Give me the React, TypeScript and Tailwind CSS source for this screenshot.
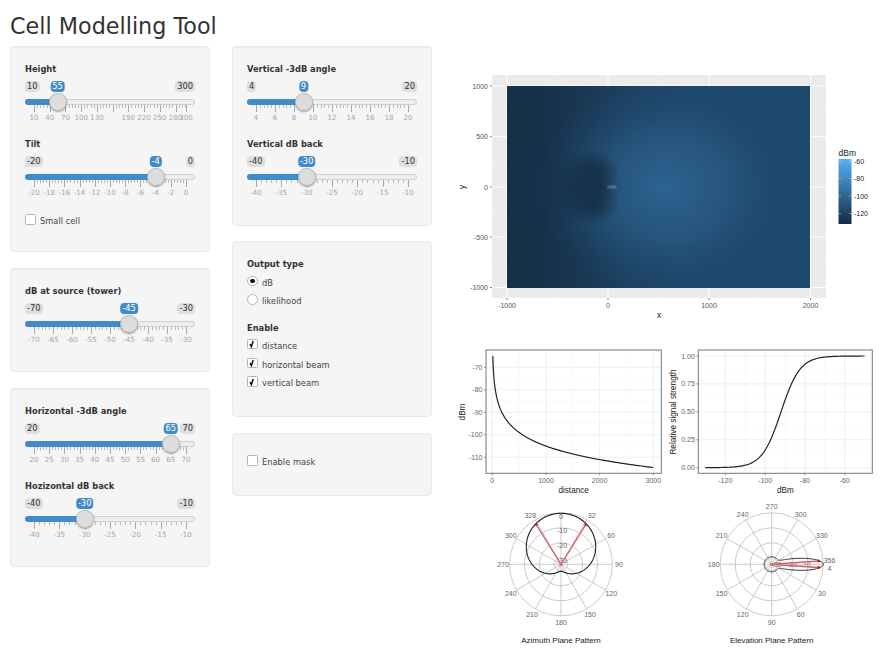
const arial = "font-['Liberation_Sans',sans-serif]"

type SliderProps = {
  label: string
  min: number
  max: number
  value: number
  step: number
  hide?: number[]
}

function Slider({ label, min, max, value, step, hide = [] }: SliderProps) {
  const pos = (v: number) => 9 + ((v - min) / (max - min)) * 152
  const majors: number[] = []
  for (let v = min; v < max; v += step) majors.push(v)
  majors.push(max)
  const minors: number[] = []
  for (let v = min; v < max - 0.001; v += step / 5) {
    if (!majors.some(m => Math.abs(m - v) < 0.001)) minors.push(v)
  }

  return (
    <div className="h-[75px]">
      <div className="h-[14px] text-[8.3px] leading-[14px] font-bold text-[#333]">{label}</div>
      <div className="relative h-[61px]">
        <div className="flex justify-between pt-[5px] text-[8.3px] leading-[11px] text-[#333]">
          <span className="rounded-sm bg-[#dedede] px-[2px]">{min}</span>
          <span className="rounded-sm bg-[#dedede] px-[2px]">{max}</span>
        </div>
        <span
          className="absolute top-[5px] -translate-x-1/2 rounded-sm bg-[#428bca] px-[2px] text-[8.3px] leading-[11px] text-white"
          style={{ left: pos(value) }}
        >
          {value}
        </span>
        <div className="relative mt-[7px] h-[6px] rounded-full border border-[#cfcfcf] bg-[#eeeeee]">
          <div
            className="absolute -top-px -bottom-px -left-px rounded-l-full bg-[#428bca]"
            style={{ width: pos(value) }}
          />
        </div>
        {minors.map(v => (
          <span key={v} className="absolute top-[29px] h-[3px] w-px bg-[#bbbbbb]" style={{ left: pos(v) }} />
        ))}
        {majors.map(v => (
          <span key={v} className="absolute top-[29px] h-[7px] w-px bg-[#a8a8a8]" style={{ left: pos(v) }} />
        ))}
        {majors
          .filter(v => !hide.includes(v))
          .map(v => (
            <span
              key={v}
              className="absolute top-[36px] -translate-x-1/2 text-[7.1px] leading-[12px] text-[#a6a6a6]"
              style={{ left: pos(v) }}
            >
              {v}
            </span>
          ))}
        <span
          className="absolute top-[16.5px] h-[18px] w-[18px] -translate-x-1/2 rounded-full border border-[#bdbdbd] bg-[#dddddd] shadow-[0_1px_2px_rgba(0,0,0,0.35)]"
          style={{ left: pos(value) }}
        />
      </div>
    </div>
  )
}

function Panel({ className, children }: { className: string; children: React.ReactNode }) {
  return (
    <div className={`w-[200px] rounded border border-[#e8e8e8] bg-[#f5f5f5] px-[14px] pt-[15px] shadow-[inset_0_1px_1px_rgba(0,0,0,0.03)] ${className}`}>
      {children}
    </div>
  )
}

function Check({ label, checked }: { label: string; checked?: boolean }) {
  return (
    <div className="flex h-[18.7px] items-center text-[8.3px] text-[#444]">
      <span className="mr-[4.5px] flex h-[10.5px] w-[10.5px] -translate-y-[1px] items-center justify-center rounded-[1.5px] border border-[#b5b5b5] bg-white">
        {checked && (
          <svg width="8" height="8" viewBox="0 0 8 8">
            <path d="M2 4.2 L3.4 6.6 L5.2 1" fill="none" stroke="#111" strokeWidth="1.5" />
          </svg>
        )}
      </span>
      <span className="translate-y-[1px]">{label}</span>
    </div>
  )
}

function Radio({ label, checked }: { label: string; checked?: boolean }) {
  return (
    <div className="flex h-[18.7px] items-center text-[8.3px] text-[#444]">
      <span className="mr-[4.5px] flex h-[10.5px] w-[10.5px] -translate-y-[1px] items-center justify-center rounded-full border border-[#b5b5b5] bg-white">
        {checked && <span className="h-[4.5px] w-[4.5px] rounded-full bg-[#111]" />}
      </span>
      <span className="translate-y-[1px]">{label}</span>
    </div>
  )
}

function HeatMap() {
  const majorX = [507, 608, 709, 810.5]
  const minorX = [557.5, 658.5, 759.7]
  const majorY = [86, 136.7, 187, 237, 287.5]
  const minorY = [111.3, 162, 212, 262.3]
  return (
    <svg width="437" height="260" viewBox="450 65 437 260" className={`block ${arial}`}>
      <defs>
        <linearGradient id="base" x1="0" x2="1" y1="0" y2="0">
          <stop offset="0" stopColor="#16304a" />
          <stop offset="0.12" stopColor="#16304a" />
          <stop offset="0.24" stopColor="#193753" />
          <stop offset="0.38" stopColor="#1c4060" />
          <stop offset="0.6" stopColor="#1f476c" />
          <stop offset="1" stopColor="#1f486d" />
        </linearGradient>
        <radialGradient id="glow">
          <stop offset="0" stopColor="#2d6491" stopOpacity="1" />
          <stop offset="0.5" stopColor="#2a5b86" stopOpacity="0.65" />
          <stop offset="1" stopColor="#1f476c" stopOpacity="0" />
        </radialGradient>
        <radialGradient id="hole">
          <stop offset="0" stopColor="#15304a" stopOpacity="1" />
          <stop offset="1" stopColor="#15304a" stopOpacity="0" />
        </radialGradient>
        <linearGradient id="legend" x1="0" x2="0" y1="0" y2="1">
          <stop offset="0" stopColor="#56b1f7" />
          <stop offset="1" stopColor="#132b43" />
        </linearGradient>
        <filter id="soft">
          <feGaussianBlur stdDeviation="1" />
        </filter>
        <clipPath id="raster">
          <rect x="507" y="86" width="303" height="202" />
        </clipPath>
      </defs>
      <rect x="492" y="75" width="334" height="223" fill="#ebebeb" />
      {minorX.map(x => <line key={x} x1={x} x2={x} y1="75" y2="298" stroke="#f5f5f5" strokeWidth="0.5" />)}
      {minorY.map(y => <line key={y} y1={y} y2={y} x1="492" x2="826" stroke="#f5f5f5" strokeWidth="0.5" />)}
      {majorX.map(x => <line key={x} x1={x} x2={x} y1="75" y2="298" stroke="#fff" />)}
      {majorY.map(y => <line key={y} y1={y} y2={y} x1="492" x2="826" stroke="#fff" />)}
      <rect x="507" y="86" width="303" height="202" fill="url(#base)" />
      <g clipPath="url(#raster)">
        <ellipse cx="665" cy="187" rx="130" ry="110" fill="url(#glow)" />
      </g>
      <ellipse cx="580" cy="187" rx="42" ry="40" fill="url(#hole)" />
      <ellipse cx="594" cy="171" rx="25" ry="22" fill="url(#hole)" />
      <ellipse cx="594" cy="203" rx="25" ry="22" fill="url(#hole)" />
      <ellipse cx="596" cy="187" rx="18" ry="18" fill="url(#hole)" />
      <ellipse cx="612" cy="187" rx="5" ry="1.3" fill="#4f86ad" filter="url(#soft)" />

      {majorX.map((x, i) => (
        <g key={x}>
          <line x1={x} x2={x} y1="298" y2="300" stroke="#333" strokeWidth="0.6" />
          <text x={x} y="308" textAnchor="middle" fontSize="7" fill="#555">{['-1000', '0', '1000', '2000'][i]}</text>
        </g>
      ))}
      {majorY.map((y, i) => (
        <g key={y}>
          <line x1="490" x2="492" y1={y} y2={y} stroke="#333" strokeWidth="0.6" />
          <text x="488" y={y + 2.5} textAnchor="end" fontSize="7" fill="#555">{['1000', '500', '0', '-500', '-1000'][i]}</text>
        </g>
      ))}
      <text x="659" y="318" textAnchor="middle" fontSize="8.5" fill="#222">x</text>
      <text x="465" y="187" textAnchor="middle" fontSize="8.5" fill="#222" transform="rotate(-90 465 187)">y</text>
      <text x="838.5" y="156" fontSize="8.5" fill="#222">dBm</text>
      <rect x="838.5" y="159" width="13" height="65" fill="url(#legend)" />
      {[161, 178.5, 196, 213.5].map((y, i) => (
        <g key={y}>
          <line x1="838.5" x2="841" y1={y} y2={y} stroke="#fff" strokeWidth="0.4" />
          <line x1="849" x2="851.5" y1={y} y2={y} stroke="#fff" strokeWidth="0.4" />
          <text x="854" y={y + 2.5} fontSize="7" fill="#222">{['-60', '-80', '-100', '-120'][i]}</text>
        </g>
      ))}
    </svg>
  )
}

type LinePlotProps = {
  x0: number
  width: number
  left: number
  right: number
  xTicks: [number, string][]
  yTicks: [number, string][]
  xTitle: string
  yTitle: string
  yTitleX: number
  path: string
}

function LinePlot({ x0, width, left, right, xTicks, yTicks, xTitle, yTitle, yTitleX, path }: LinePlotProps) {
  const top = 350
  const bottom = 473.3
  const mid = (a: [number, string][]) => a.slice(1).map((t, i) => (t[0] + a[i][0]) / 2)
  return (
    <svg width={width} height="160" viewBox={`${x0} 340 ${width} 160`} className={`block shrink-0 ${arial}`}>
      {mid(xTicks).map(x => <line key={x} x1={x} x2={x} y1={top} y2={bottom} stroke="#f2f2f2" strokeWidth="0.5" />)}
      {mid(yTicks).map(y => <line key={y} y1={y} y2={y} x1={left} x2={right} stroke="#f2f2f2" strokeWidth="0.5" />)}
      {xTicks.map(([x]) => <line key={x} x1={x} x2={x} y1={top} y2={bottom} stroke="#ebebeb" strokeWidth="0.8" />)}
      {yTicks.map(([y]) => <line key={y} y1={y} y2={y} x1={left} x2={right} stroke="#ebebeb" strokeWidth="0.8" />)}
      <path d={path} fill="none" stroke="#222" strokeWidth="1.2" />
      <rect x={left} y={top} width={right - left} height={bottom - top} fill="none" stroke="#777" strokeWidth="1" />
      {xTicks.map(([x, t]) => (
        <g key={x}>
          <line x1={x} x2={x} y1={bottom} y2={bottom + 2} stroke="#555" strokeWidth="0.6" />
          <text x={x} y={bottom + 9.5} textAnchor="middle" fontSize="7" fill="#666">{t}</text>
        </g>
      ))}
      {yTicks.map(([y, t]) => (
        <g key={y}>
          <line x1={left - 2} x2={left} y1={y} y2={y} stroke="#555" strokeWidth="0.6" />
          <text x={left - 3.5} y={y + 2.5} textAnchor="end" fontSize="7" fill="#666">{t}</text>
        </g>
      ))}
      <text x={(left + right) / 2} y="493" textAnchor="middle" fontSize="8.2" fill="#222">{xTitle}</text>
      <text x={yTitleX} y="412" textAnchor="middle" fontSize="8.2" fill="#222" transform={`rotate(-90 ${yTitleX} 412)`}>{yTitle}</text>
    </svg>
  )
}

function pathFrom(pts: [number, number][]) {
  return pts.map((p, i) => `${i ? 'L' : 'M'}${p[0].toFixed(2)} ${p[1].toFixed(2)}`).join(' ')
}

// path loss against distance
const lossPts: [number, number][] = []
for (let i = 0; i <= 300; i++) {
  const d = 10 * Math.pow(300, i / 300)
  const db = -45 - 20 * Math.log10(d)
  lossPts.push([492.3 + (d / 3000) * 161, 367.3 + ((-70 - db) / 40) * 90])
}

// logistic signal strength
const signalPts: [number, number][] = []
for (let d = -130; d <= -50; d += 0.5) {
  const s = 1 / (1 + Math.exp(-0.21 * (d + 92)))
  signalPts.push([725.3 + ((d + 120) / 60) * 119.4, 467.7 - s * 111.7])
}

type PolarProps = {
  cx: number
  x0: number
  width: number
  title: string
  labels: [string, number][]
  rings: [string, number, number][]
  curve: (deg: number) => number
  red: number[]
  stroke: number
}

function Polar({ cx, x0, width, title, labels, rings, curve, red, stroke }: PolarProps) {
  const cy = 564.3
  const at = (deg: number, r: number): [number, number] => [
    cx + r * Math.sin((deg * Math.PI) / 180),
    cy - r * Math.cos((deg * Math.PI) / 180),
  ]
  const pts: [number, number][] = []
  for (let a = 0; a <= 360; a += 1) pts.push(at(a, curve(a)))
  const spokes = [0, 30, 60, 90, 120, 150, 180, 210, 240, 270, 300, 330]
  return (
    <svg width={width} height="151" viewBox={`${x0} 500 ${width} 151`} className={`block shrink-0 ${arial}`}>
      {[51.5, 36.5, 21.5, 6.5].map(r => (
        <circle key={r} cx={cx} cy={cy} r={r} fill="none" stroke="#c4c4c4" strokeWidth="0.9" />
      ))}
      {spokes.map(a => {
        const [x, y] = at(a, 51.5)
        return <line key={a} x1={cx} y1={cy} x2={x} y2={y} stroke="#c4c4c4" strokeWidth="0.9" />
      })}
      {labels.map(([t, a]) => {
        const [x, y] = at(a, 58)
        return <text key={t} x={x} y={y + 2.5} textAnchor="middle" fontSize="7" fill="#666">{t}</text>
      })}
      {rings.map(([t, dx, dy]) => (
        <text key={t} x={cx + dx} y={cy + dy} textAnchor="middle" fontSize="7" fill="#666">{t}</text>
      ))}
      <path d={pathFrom(pts) + ' Z'} fill="none" stroke="#222" strokeWidth={stroke} />
      {red.map(a => {
        const [x, y] = at(a, 47)
        return (
          <g key={a}>
            <line x1={cx} y1={cy} x2={x} y2={y} stroke="#eba0a0" strokeWidth="1.6" />
            <line x1={cx} y1={cy} x2={x} y2={y} stroke="#cc2f3a" strokeWidth="0.7" />
            <circle cx={x} cy={y} r="1.5" fill="#c01f2c" />
          </g>
        )
      })}
      <circle cx={cx} cy={cy} r="1.6" fill="#c9737a" />
      <text x={cx} y="642.5" textAnchor="middle" fontSize="8" fill="#222">{title}</text>
    </svg>
  )
}

export default function App() {
  return (
    <div className="h-[651px] w-[887px] overflow-hidden bg-white font-['DejaVu_Sans',sans-serif]">
      <div className="flex">
        <div className="w-[450px] shrink-0 pl-[10px]">
          <h2 className="h-[47px] pt-[10px] text-[22.3px] leading-[32px] font-normal text-[#333]">Cell Modelling Tool</h2>
          <div className="-mt-px flex gap-[22px]">
            <div className="flex flex-col gap-[16px]">
              <Panel className="h-[206px]">
                <Slider label="Height" min={10} max={300} value={55} step={30} hide={[160]} />
                <Slider label="Tilt" min={-20} max={0} value={-4} step={2} />
                <div className="-mt-px"><Check label="Small cell" /></div>
              </Panel>
              <Panel className="h-[104px]">
                <Slider label="dB at source (tower)" min={-70} max={-30} value={-45} step={5} />
              </Panel>
              <Panel className="h-[179px]">
                <Slider label="Horizontal -3dB angle" min={20} max={70} value={65} step={5} />
                <Slider label="Hozizontal dB back" min={-40} max={-10} value={-30} step={5} />
              </Panel>
            </div>
            <div className="flex flex-col gap-[15px]">
              <Panel className="h-[180px]">
                <Slider label="Vertical -3dB angle" min={4} max={20} value={9} step={2} />
                <Slider label="Vertical dB back" min={-40} max={-10} value={-30} step={5} />
              </Panel>
              <Panel className="h-[176px]">
                <div className="mb-[1.5px] h-[14px] text-[8.3px] leading-[14px] font-bold text-[#333]">Output type</div>
                <Radio label="dB" checked />
                <Radio label="likelihood" />
                <div className="mt-[11px] mb-[1px] h-[14px] text-[8.3px] leading-[14px] font-bold text-[#333]">Enable</div>
                <Check label="distance" checked />
                <Check label="horizontal beam" checked />
                <Check label="vertical beam" checked />
              </Panel>
              <Panel className="mt-px h-[63px]">
                <div className="pt-[3px]"><Check label="Enable mask" /></div>
              </Panel>
            </div>
          </div>
        </div>
        <div className="w-[437px] shrink-0 pt-[65px]">
          <HeatMap />
          <div className="mt-[15px] flex">
            <LinePlot
              x0={450}
              width={213}
              left={486}
              right={661.3}
              xTicks={[[492.3, '0'], [546, '1000'], [599.6, '2000'], [653.3, '3000']]}
              yTicks={[[367.3, '-70'], [389.8, '-80'], [412.3, '-90'], [434.8, '-100'], [457.3, '-110']]}
              xTitle="distance"
              yTitle="dBm"
              yTitleX={464.5}
              path={pathFrom(lossPts)}
            />
            <LinePlot
              x0={663}
              width={224}
              left={698.3}
              right={872.3}
              xTicks={[[725.3, '-120'], [765.1, '-100'], [804.9, '-80'], [844.7, '-60']]}
              yTicks={[[356, '1.00'], [383.9, '0.75'], [411.8, '0.50'], [439.8, '0.25'], [467.7, '0.00']]}
              xTitle="dBm"
              yTitle="Relative signal strength"
              yTitleX={676}
              path={pathFrom(signalPts)}
            />
          </div>
          <div className="flex">
            <Polar
              x0={450}
              width={217}
              cx={561}
              title="Azimuth Plane Pattern"
              labels={[['328', 328], ['32', 32], ['60', 60], ['90', 90], ['120', 120], ['150', 150], ['180', 180], ['210', 210], ['240', 240], ['270', 270], ['300', 300]]}
              rings={[['0', 0, -45], ['-10', 1, -31], ['-20', 1, -16], ['-30', 1, -1]]}
              curve={a => 29 + 22 * Math.cos((a * Math.PI) / 180)}
              red={[32, -32]}
              stroke={1.1}
            />
            <Polar
              x0={667}
              width={220}
              cx={771.7}
              title="Elevation Plane Pattern"
              labels={[['270', 0], ['300', 30], ['330', 60], ['356', 86], ['4', 94], ['30', 120], ['60', 150], ['90', 180], ['120', 210], ['150', 240], ['180', 270], ['210', 300], ['240', 330]]}
              rings={[['-10', 34, 2.5], ['-20', 20, 2.5], ['-30', 5, 2.5]]}
              curve={a => {
                // deviation from boresight, which points right on the screen here
                const d = Math.abs(((a - 90 + 540) % 360) - 180)
                return 7.6 + 44 * Math.exp(-(d * d) / 200)
              }}
              red={[86, 94]}
              stroke={0.9}
            />
          </div>
        </div>
      </div>
    </div>
  )
}
